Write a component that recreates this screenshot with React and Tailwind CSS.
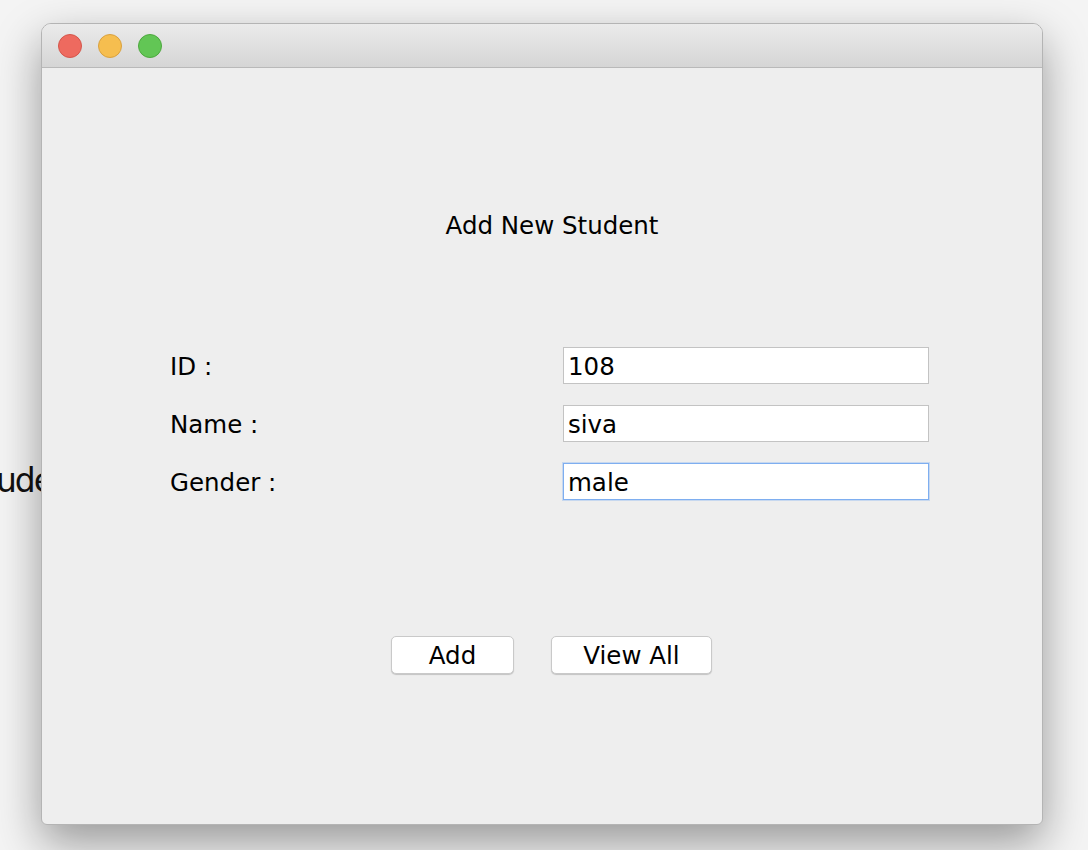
const FONT = "font-['DejaVu_Sans','Liberation_Sans',sans-serif]"

const FIELDS = [
  { label: 'ID :', value: '108' },
  { label: 'Name :', value: 'siva' },
  { label: 'Gender :', value: 'male', focused: true },
]

export default function App() {
  return (
    <div className={`relative w-[1088px] h-[850px] overflow-hidden bg-[#f4f4f4] ${FONT} text-black`}>
      {/* window behind, only a bit of its text peeks out */}
      <div className="absolute left-[-34px] top-[461px] text-[33px] leading-[40px] tracking-[-2px] text-[#111]">Student</div>

      <div className="relative pl-[41px] pt-[23px]">
        <div className="w-[1002px] h-[802px] flex flex-col rounded-t-[10px] rounded-b-[6px] border border-[#b4b4b4] bg-[#eeeeee] overflow-hidden shadow-[0_18px_45px_rgba(0,0,0,0.38)]">
          <TitleBar />

          <div className="flex-1 flex flex-col">
            <div className="flex justify-center pl-[20px] mt-[143px]">
              <h1 className="text-[24.5px] leading-[30px] font-normal">Add New Student</h1>
            </div>

            <div className="mt-[106px] pl-[128px] flex flex-col gap-[21px]">
              {FIELDS.map(f => (
                <div key={f.label} className="flex items-center">
                  <div className="w-[393px] text-[24.5px] leading-[30px] pt-[3px]">{f.label}</div>
                  <div className={`w-[366px] h-[37px] bg-white flex items-center pl-[4px] pt-[3px] text-[24.5px] leading-[30px] border ${f.focused ? 'border-[#7eaef0] shadow-[0_0_0_1px_rgba(126,174,240,0.35)]' : 'border-[#c3c3c3]'}`}>
                    {f.value}
                  </div>
                </div>
              ))}
            </div>

            <div className="mt-[136px] pl-[349px] flex gap-[37px]">
              <Button w="w-[123px]">Add</Button>
              <Button w="w-[161px]">View All</Button>
            </div>
          </div>
        </div>
      </div>
    </div>
  )
}

function TitleBar() {
  return (
    <div className="h-[44px] shrink-0 flex items-center gap-[16px] pl-[16px] bg-gradient-to-b from-[#ebebeb] to-[#d5d5d5] border-b border-[#b9b9b9]">
      <span className="w-[24px] h-[24px] rounded-full bg-[#ee6a5f] border border-[#d4564b]" />
      <span className="w-[24px] h-[24px] rounded-full bg-[#f6be4f] border border-[#d9a13f]" />
      <span className="w-[24px] h-[24px] rounded-full bg-[#62c655] border border-[#4da83e]" />
    </div>
  )
}

function Button({ w, children }) {
  return (
    <button className={`${w} h-[38px] pt-[1px] rounded-[5px] bg-white border border-[#c9c9c9] shadow-[0_1px_1px_rgba(0,0,0,0.18)] text-[24.5px] leading-[30px] text-black`}>
      {children}
    </button>
  )
}
